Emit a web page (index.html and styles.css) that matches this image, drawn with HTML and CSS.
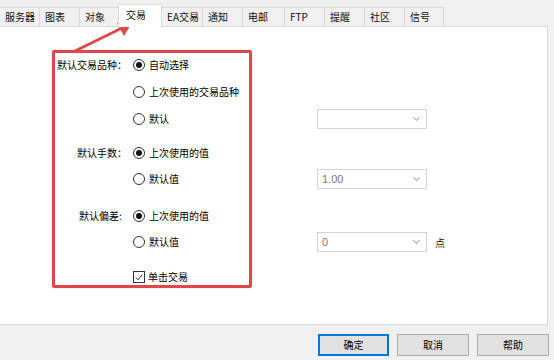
FILE: index.html
```html
<!DOCTYPE html>
<html lang="zh-CN">
<head>
<meta charset="utf-8">
<title>选项 - 交易</title>
<link rel="stylesheet" href="styles.css">
</head>
<body>
<div class="dialog">
  <div class="tabs">
    <div class="tab first">服务器</div>
    <div class="tab">图表</div>
    <div class="tab w39">对象</div>
    <div class="tab active">交易</div>
    <div class="tab w41">EA交易</div>
    <div class="tab">通知</div>
    <div class="tab w42">电邮</div>
    <div class="tab">FTP</div>
    <div class="tab">提醒</div>
    <div class="tab">社区</div>
    <div class="tab w39">信号</div>
  </div>
  <div class="panel">
    <div class="group g1">
      <div class="row r27">
        <div class="label">默认交易品种：</div>
        <div class="opt"><span class="radio on"></span>自动选择</div>
      </div>
      <div class="row r27">
        <div class="label"></div>
        <div class="opt"><span class="radio"></span>上次使用的交易品种</div>
      </div>
      <div class="row r27">
        <div class="label"></div>
        <div class="opt"><span class="radio"></span>默认</div>
        <div class="select"><span class="val"></span><span class="chev"></span></div>
      </div>
    </div>
    <div class="group g2">
      <div class="row">
        <div class="label">默认手数：</div>
        <div class="opt"><span class="radio on"></span>上次使用的值</div>
      </div>
      <div class="row">
        <div class="label"></div>
        <div class="opt"><span class="radio"></span>默认值</div>
        <div class="select"><span class="val">1.00</span><span class="chev"></span></div>
      </div>
    </div>
    <div class="group g3">
      <div class="row">
        <div class="label">默认偏差:</div>
        <div class="opt"><span class="radio on"></span>上次使用的值</div>
      </div>
      <div class="row">
        <div class="label"></div>
        <div class="opt"><span class="radio"></span>默认值</div>
        <div class="select"><span class="val">0</span><span class="chev"></span></div>
        <div class="unit">点</div>
      </div>
    </div>
    <div class="group g4">
      <div class="row">
        <div class="label"></div>
        <div class="opt check-opt"><span class="check"><svg viewBox="0 0 11 11" width="11" height="11"><path d="M2 5.5 L4.5 8 L9 2.5" fill="none" stroke="#222" stroke-width="1.1"/></svg></span>单击交易</div>
      </div>
    </div>
  </div>
  <div class="buttons">
    <button class="btn default">确定</button>
    <button class="btn">取消</button>
    <button class="btn">帮助</button>
  </div>
  <div class="highlight"></div>
  <svg class="arrow" width="554" height="360" viewBox="0 0 554 360">
    <line x1="75" y1="51" x2="122" y2="28" stroke="#e0474c" stroke-width="3" stroke-linecap="round"/>
    <polygon points="133,21 117,23 124,36" fill="#e0474c"/>
  </svg>
</div>
</body>
</html>
```

FILE: styles.css
```css
* { box-sizing: border-box; }
html, body { margin: 0; padding: 0; }
body {
  background: #f0f0f0;
  font-family: "Noto Sans CJK SC", "Noto Sans", sans-serif;
  font-size: 10px;
  color: #000;
  width: 554px;
  height: 360px;
  overflow: hidden;
}
.dialog { position: relative; width: 554px; height: 360px; }

.tabs {
  display: flex;
  align-items: flex-end;
  height: 26px;
  padding-top: 4px;
}
.tab {
  width: 40px;
  height: 19px;
  line-height: 18px;
  padding-left: 5px;
  border-top: 1px solid #d9d9d9;
  border-right: 1px solid #d9d9d9;
  background: #f0f0f0;
  white-space: nowrap;
  color: #111;
}
.tab.first { border-left: none; }
.tab.w39 { width: 39px; }
.tab.w41 { width: 41px; }
.tab.w42 { width: 42px; }
.tab.active {
  width: 44px;
  margin-left: -1px;
  height: 23px;
  line-height: 20px;
  padding-left: 7px;
  background: #fff;
  border-left: 1px solid #d9d9d9;
  position: relative;
  top: 1px;
  z-index: 1;
}

.panel {
  background: #fff;
  border: 1px solid #d9d9d9;
  border-left: none;
  width: 548px;
  height: 299px;
  padding-top: 24px;
}
.group { display: flex; flex-direction: column; }
.g2 { margin-top: 8px; }
.g3 { margin-top: 11px; }
.g4 { margin-top: 9px; }

.row {
  display: flex;
  align-items: center;
  height: 26px;
}
.row.r27 { height: 27px; }
.label {
  width: 132px;
  padding-left: 57px;
  white-space: nowrap;
  line-height: 14px;
}
.g2 .label { padding-left: 77px; }
.g3 .label { padding-left: 79px; }
.opt {
  display: flex;
  align-items: center;
  width: 185px;
  line-height: 14px;
  white-space: nowrap;
}
.radio {
  width: 12px;
  height: 12px;
  border: 1px solid #333;
  border-radius: 50%;
  margin-right: 4px;
  margin-left: 1px;
  display: flex;
  align-items: center;
  justify-content: center;
  background: #fff;
}
.radio.on::after {
  content: "";
  width: 6px;
  height: 6px;
  border-radius: 50%;
  background: #111;
}
.check {
  width: 12px;
  height: 12px;
  border: 1px solid #333;
  margin-right: 3px;
  margin-left: 1px;
  display: flex;
  align-items: center;
  justify-content: center;
}
.check svg { display: block; }

.select {
  width: 110px;
  height: 20px;
  border: 1px solid #d4d4d4;
  background: #fff;
  display: flex;
  align-items: center;
  justify-content: space-between;
  padding: 0 7px 0 4px;
  color: #7a7a7a;
  font-family: "Liberation Sans", Arial, sans-serif;
  font-size: 11px;
}
.chev {
  width: 5px;
  height: 5px;
  border-right: 1px solid #aaa;
  border-bottom: 1px solid #aaa;
  transform: rotate(45deg);
  margin-top: -3px;
}
.unit { margin-left: 8px; color: #222; }

.buttons {
  display: flex;
  justify-content: flex-end;
  gap: 8px;
  padding: 9px 5px 0 0;
}
.btn {
  width: 72px;
  height: 22px;
  border: 1px solid #adadad;
  background: #e1e1e1;
  font-family: "Noto Sans CJK SC", sans-serif;
  font-size: 10px;
  color: #000;
  padding: 0;
  line-height: 18px;
}
.btn.default {
  width: 71px;
  border-color: #0078d7;
  box-shadow: inset 0 0 0 1px #0078d7;
}

.highlight {
  position: absolute;
  left: 52px;
  top: 50px;
  width: 200px;
  height: 238px;
  border: 3px solid #e0474c;
  border-radius: 2px;
  box-shadow: 0 0 1px rgba(224, 71, 76, 0.6);
  pointer-events: none;
}
.arrow {
  position: absolute;
  left: 0;
  top: 0;
  pointer-events: none;
}
```
